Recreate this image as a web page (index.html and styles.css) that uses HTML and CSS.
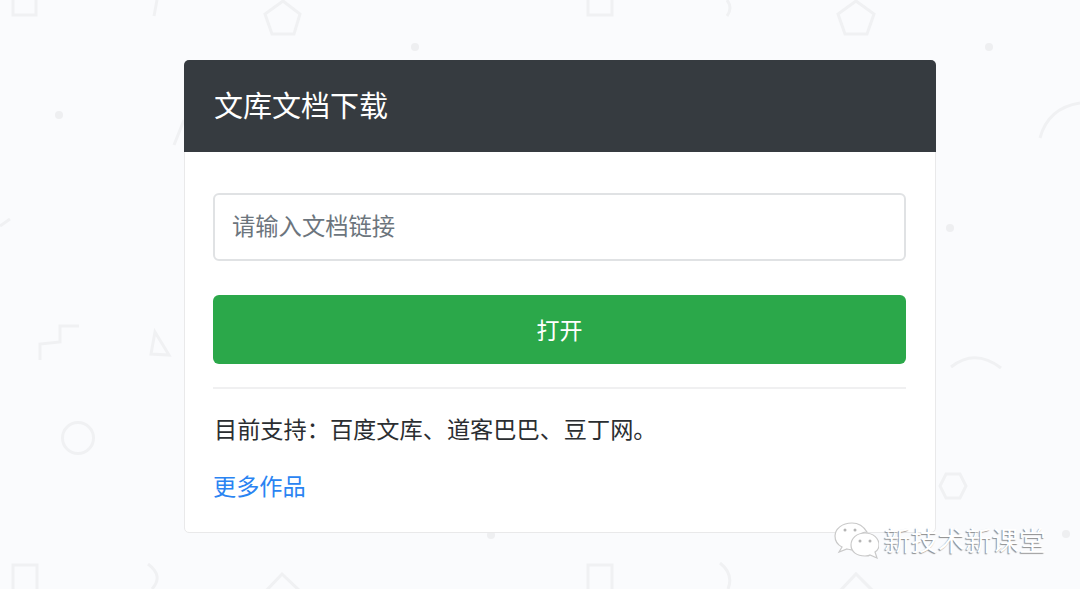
FILE: index.html
```html
<!DOCTYPE html>
<html lang="zh-CN">
<head>
    <meta charset="UTF-8">
    <meta name="viewport" content="width=device-width, initial-scale=1.0">
    <title>文库文档下载</title>
    <link rel="stylesheet" href="styles.css">
</head>
<body>
    <!-- background pattern -->
    <svg class="pattern" width="1080" height="589" viewBox="0 0 1080 589" fill="none" aria-hidden="true">
        <rect x="13" y="-9" width="23" height="24"/>
        <path d="M157 0 L154 16"/>
        <path d="M283 1 L300 14 L294 34 L272 34 L265 14 Z"/>
        <rect x="588" y="-9" width="24" height="24"/>
        <path d="M727 0 Q733 8 727 16"/>
        <path d="M856 1 L874 14 L867 34 L845 34 L838 14 Z"/>
        <path d="M184 120 L174 145"/>
        <path d="M40 360 L40 344 L60 342 L60 326 L79 326"/>
        <path d="M155 332 L169 355 L151 354 Z"/>
        <circle cx="78" cy="438" r="15.5"/>
        <path d="M1040 138 Q1048 108 1080 103"/>
        <path d="M951 367 Q975 348 1001 368"/>
        <path d="M940 486 L946 474 L960 474 L966 486 L960 498 L946 498 Z"/>
        <path d="M0 226 L10 219"/>
        <rect x="13" y="565" width="24" height="30"/>
        <path d="M148 564 Q164 576 152 589"/>
        <path d="M264 593 L282 574 L302 593"/>
        <rect x="588" y="565" width="24" height="30"/>
        <path d="M720 563 Q734 574 728 589"/>
        <path d="M838 593 L856 574 L875 593"/>
        <circle class="dot" cx="59" cy="115" r="4"/>
        <circle class="dot" cx="415" cy="47" r="4"/>
        <circle class="dot" cx="989" cy="47" r="4"/>
        <circle class="dot" cx="950" cy="228" r="4"/>
        <circle class="dot" cx="1066" cy="534" r="4"/>
        <circle class="dot" cx="491" cy="535" r="4"/>
    </svg>

    <div class="card">
        <div class="card-header">文库文档下载</div>
        <div class="card-body">
            <input class="form-control" type="text" placeholder="请输入文档链接">
            <button class="btn-open" type="button">打开</button>
            <hr class="divider">
            <p class="support">目前支持：百度文库<span class="sep">、</span>道客巴巴<span class="sep">、</span>豆丁网。</p>
            <a class="more" href="#">更多作品</a>
        </div>
    </div>

    <!-- watermark -->
    <div class="watermark">
        <svg class="wechat" width="46" height="38" viewBox="0 0 46 38">
            <path class="bubble" d="M19 2 C9 2 2 8 2 15 C2 20 5 24 9 26 L6 31 L14 28 C17 29 20 29 22 28 C20 18 27 11 34 11 C31 6 26 2 19 2 Z"/>
            <path class="bubble" d="M32 12 C24 12 18 17 18 24 C18 31 24 35 32 35 C34 35 36 35 37 34 L44 37 L42 31 C45 29 46 27 46 24 C46 17 40 12 32 12 Z"/>
            <circle class="eye" cx="12" cy="9" r="1.5"/>
            <circle class="eye" cx="22" cy="9" r="1.5"/>
            <circle class="eye" cx="27" cy="20" r="1.5"/>
            <circle class="eye" cx="37" cy="20" r="1.5"/>
        </svg>
        <span class="watermark-text">新技术新课堂</span>
    </div>
</body>
</html>
```

FILE: styles.css
```css
html,
body {
    height: 100%;
}

body {
    margin: 0;
    overflow: hidden;
    position: relative;
    background-color: #fafbfd;
    font-family: "Noto Sans CJK SC", "Liberation Sans", sans-serif;
    color: #2b2e31;
}

/* Background shapes */
.pattern {
    position: absolute;
    top: 0;
    left: 0;
}

.pattern > * {
    stroke: #f0f1f3;
    stroke-width: 3;
}

.pattern .dot {
    fill: #eeeff1;
    stroke: none;
}

/* Card */
.card {
    position: relative;
    box-sizing: border-box;
    width: 752px;
    height: 473px;
    margin: 60px 0 0 184px;
    background-color: #fff;
    border: 1px solid #e9e9ea;
    border-radius: 5px;
}

.card-header {
    margin: -1px -1px 0;
    height: 92px;
    padding-left: 30px;
    background-color: #363b40;
    border-radius: 5px 5px 0 0;
    color: #fff;
    font-size: 29px;
    line-height: 88px;
}

.card-body {
    display: flex;
    flex-direction: column;
    padding: 41px 29px 0 28px;
}

.form-control {
    box-sizing: border-box;
    height: 68px;
    padding: 0 17px 4px;
    background-color: #fff;
    border: 2px solid #e0e2e4;
    border-radius: 6px;
    outline: none;
    font-family: inherit;
    font-size: 23.3px;
}

.form-control::placeholder {
    color: #6c757d;
    opacity: 1;
}

.btn-open {
    height: 69px;
    margin-top: 34px;
    padding-bottom: 3px;
    background-color: #2ba84a;
    border: 0;
    border-radius: 6px;
    color: #fff;
    font-family: inherit;
    font-size: 23px;
}

.divider {
    width: 100%;
    height: 2px;
    margin: 23px 0 0;
    background-color: #f0f0f1;
    border: 0;
}

.support {
    margin: 22px 0 0 1px;
    font-size: 23.2px;
    line-height: 34px;
}

.sep {
    margin-right: 1px;
}

.more {
    margin-top: 23px;
    color: #2a84f2;
    font-size: 23.2px;
    line-height: 34px;
    text-decoration: none;
}

/* Watermark over the corner of the card */
.watermark {
    position: absolute;
    left: 833px;
    top: 521px;
    display: flex;
    align-items: center;
    gap: 5px;
}

.wechat .bubble {
    fill: #fff;
    stroke: #c9c9c9;
    stroke-width: 1.2;
}

.wechat .eye {
    fill: #b5b5b5;
}

.watermark-text {
    color: #fff;
    font-size: 27px;
    line-height: 38px;
    text-shadow: -1px 1px 1px #8c8c8c;
}
```
